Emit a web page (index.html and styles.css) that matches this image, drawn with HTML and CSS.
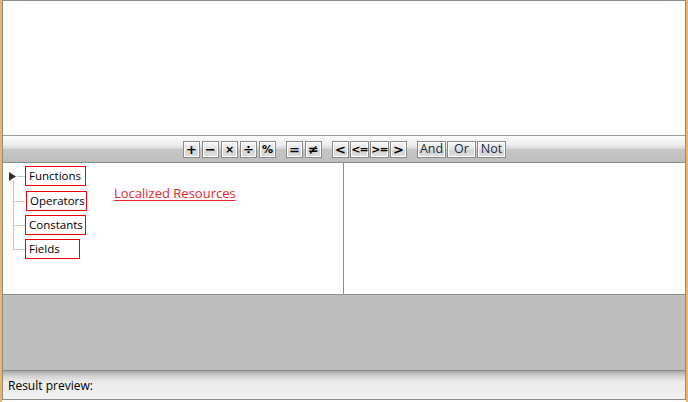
FILE: index.html
```html
<!DOCTYPE html>
<html>
<head>
<meta charset="utf-8">
<link rel="stylesheet" href="styles.css">
</head>
<body>
<div class="window">
  <div class="frame">
    <div class="top"></div>
    <div class="toolbar">
      <div class="group">
        <span class="btn sym">+</span>
        <span class="btn sym">−</span>
        <span class="btn sym small">×</span>
        <span class="btn sym">÷</span>
        <span class="btn sym small">%</span>
      </div>
      <div class="group">
        <span class="btn sym">=</span>
        <span class="btn sym">≠</span>
      </div>
      <div class="group">
        <span class="btn sym">&lt;</span>
        <span class="btn sym wide small">&lt;=</span>
        <span class="btn sym wide small">&gt;=</span>
        <span class="btn sym">&gt;</span>
      </div>
      <div class="group">
        <span class="btn word">And</span>
        <span class="btn word">Or</span>
        <span class="btn word">Not</span>
      </div>
    </div>
    <div class="panes">
      <div class="left">
        <div class="tree">
          <div class="node first">
            <svg class="arrow" width="7" height="9" viewBox="0 0 7 9"><path d="M0 0 L7 4.5 L0 9 Z" fill="#333"/></svg>
            <span class="label">Functions</span>
          </div>
          <div class="node second"><span class="label">Operators</span></div>
          <div class="node"><span class="label">Constants</span></div>
          <div class="node last"><span class="label short">Fields</span></div>
        </div>
        <a class="res">Localized Resources</a>
      </div>
      <div class="right"></div>
    </div>
    <div class="gray"></div>
    <div class="result">Result preview:</div>
  </div>
</div>
</body>
</html>
```
FILE: styles.css
```css
html, body {
  margin: 0;
  padding: 0;
  background: #ffffff;
}
.window {
  width: 688px;
  height: 402px;
  box-sizing: border-box;
  border-left: 2px solid #e9b95e;
  border-right: 2px solid #e9b95e;
  font-family: "Open Sans", "Noto Sans", sans-serif;
  font-size: 12px;
  color: #000;
}
.frame {
  height: 400px;
  box-sizing: border-box;
  border: 1px solid #8c8c8c;
  display: flex;
  flex-direction: column;
  background: #fff;
}
.top {
  height: 134px;
  background: #fff;
}
.toolbar {
  height: 26px;
  border-top: 1px solid #9a9a9a;
  border-bottom: 1px solid #8e8e8e;
  background: linear-gradient(#fcfcfc 0%, #ececec 35%, #d9d9d9 48%, #c6c6c6 52%, #bdbdbd 100%);
  display: flex;
  justify-content: center;
  align-items: center;
  gap: 10px;
  padding-left: 1px;
}
.group {
  display: flex;
  gap: 2px;
}
.group:nth-child(3) { gap: 1px; }
.group:nth-child(4) { gap: 1px; }
.btn {
  height: 17px;
  min-width: 17px;
  box-sizing: border-box;
  border: 1px solid #8a8a8a;
  box-shadow: inset 0 0 0 1px #ffffff;
  background: linear-gradient(#f6f6f6, #e2e2e2 50%, #d4d4d4 51%, #dedede);
  display: flex;
  align-items: center;
  justify-content: center;
  line-height: 1;
}
.sym {
  font-family: "DejaVu Sans", sans-serif;
  font-weight: bold;
  font-size: 13px;
}
.sym.small { font-size: 11px; }
.sym.wide { min-width: 19px; letter-spacing: -1px; }
.word {
  font-family: "Open Sans", "Noto Sans", sans-serif;
  font-size: 12.5px;
  color: #1a2a4a;
  width: 29px;
  padding-top: 1px;
}
.panes {
  height: 131px;
  border-bottom: 1px solid #8e8e8e;
  display: flex;
}
.left {
  width: 341px;
  box-sizing: border-box;
  border-right: 1px solid #8e8e8e;
  display: flex;
  align-items: flex-start;
  padding-top: 3px;
}
.right {
  flex: 1;
}
.tree {
  width: 111px;
}
.node {
  height: 24px;
  display: flex;
  align-items: flex-start;
  position: relative;
  padding-left: 22px;
}
.node.first { height: 25px; }
.node::before {
  content: "";
  position: absolute;
  left: 10px;
  top: 0;
  height: 24px;
  border-left: 1px solid #c8c8c8;
}
.node.first::before { top: 14px; height: 11px; }
.node.last::before { height: 11px; }
.node::after {
  content: "";
  position: absolute;
  left: 11px;
  top: 10px;
  width: 11px;
  border-top: 1px solid #c8c8c8;
}
.node.first::after { left: 14px; width: 8px; }
.arrow {
  position: absolute;
  left: 6px;
  top: 6px;
}
.label {
  display: inline-block;
  border: 1px solid #e8000d;
  width: 61px;
  height: 20px;
  box-sizing: border-box;
  padding: 0 0 0 3px;
  line-height: 18px;
  font-size: 11.5px;
  color: #000;
  white-space: nowrap;
}
.label.short { width: 55px; }
.second .label { margin-left: 1px; }
.res {
  margin-top: 18px;
  font-size: 13px;
  color: #e8242c;
  text-decoration: underline;
  text-underline-offset: 2px;
}
.gray {
  height: 75px;
  background: #bebebe;
  border-bottom: 1px solid #8a8a8a;
}
.result {
  flex: 1;
  background: linear-gradient(#a8a8a8 0px, #d2d2d2 5px, #ececec 11px, #f0f0f0 100%);
  padding-left: 5px;
  padding-top: 6px;
  box-sizing: border-box;
  font-size: 12px;
}
```
